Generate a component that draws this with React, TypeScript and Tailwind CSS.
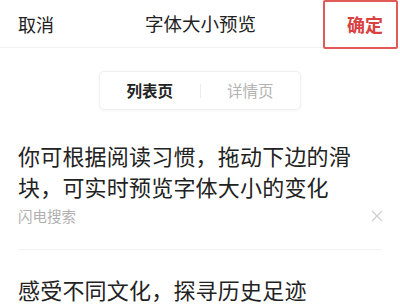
import React from "react";

export default function App() {
  const font = { fontFamily: '"Noto Sans CJK SC", "Noto Sans", sans-serif' };
  return (
    <div className="w-[400px] h-[305px] bg-white overflow-hidden relative" style={font}>
      <div className="relative h-[48px] flex items-center justify-between px-[17px] border-b border-[#f2f2f2]">
        <span className="text-[18px] text-[#222] leading-none pl-[1px]">取消</span>
        <span className="text-[18.5px] text-[#222] leading-none">字体大小预览</span>
        <span className="text-[18px] font-bold text-[#d8413f] leading-none">确定</span>
        <div className="absolute left-[323px] top-0 w-[75px] h-[49px] border-2 border-[#e05a58] rounded-[2px]" />
      </div>

      <div className="mt-[23px] mx-auto w-[202px] h-[39px] rounded-[5px] border border-[#f0f0f0] shadow-[0_1px_3px_rgba(0,0,0,0.04)] flex items-center">
        <div className="flex-1 text-center text-[15.5px] font-bold text-[#222]">列表页</div>
        <div className="w-px h-[14px] bg-[#ececec]" />
        <div className="flex-1 text-center text-[15.5px] text-[#b3b3b3]">详情页</div>
      </div>

      <div className="mt-[30px] px-[18px]">
        <div className="w-[345px] text-[22px] leading-[31px] tracking-[0.2px] text-[#222]">
          你可根据阅读习惯，拖动下边的滑块，可实时预览字体大小的变化
        </div>
        <div className="mt-[4px] flex items-center justify-between h-[20px]">
          <span className="text-[14.5px] text-[#b0b0b0] leading-[20px]">闪电搜索</span>
          <svg width="12" height="12" viewBox="0 0 12 12" className="mr-[-1px]">
            <path d="M1 1 L11 11 M11 1 L1 11" stroke="#cfcfcf" strokeWidth="1.2" />
          </svg>
        </div>
        <div className="mt-[23px] h-px bg-[#f2f2f2]" />
        <div className="mt-[24px] text-[22px] leading-[31px] tracking-[0.2px] text-[#222]">
          感受不同文化，探寻历史足迹
        </div>
      </div>
    </div>
  );
}
